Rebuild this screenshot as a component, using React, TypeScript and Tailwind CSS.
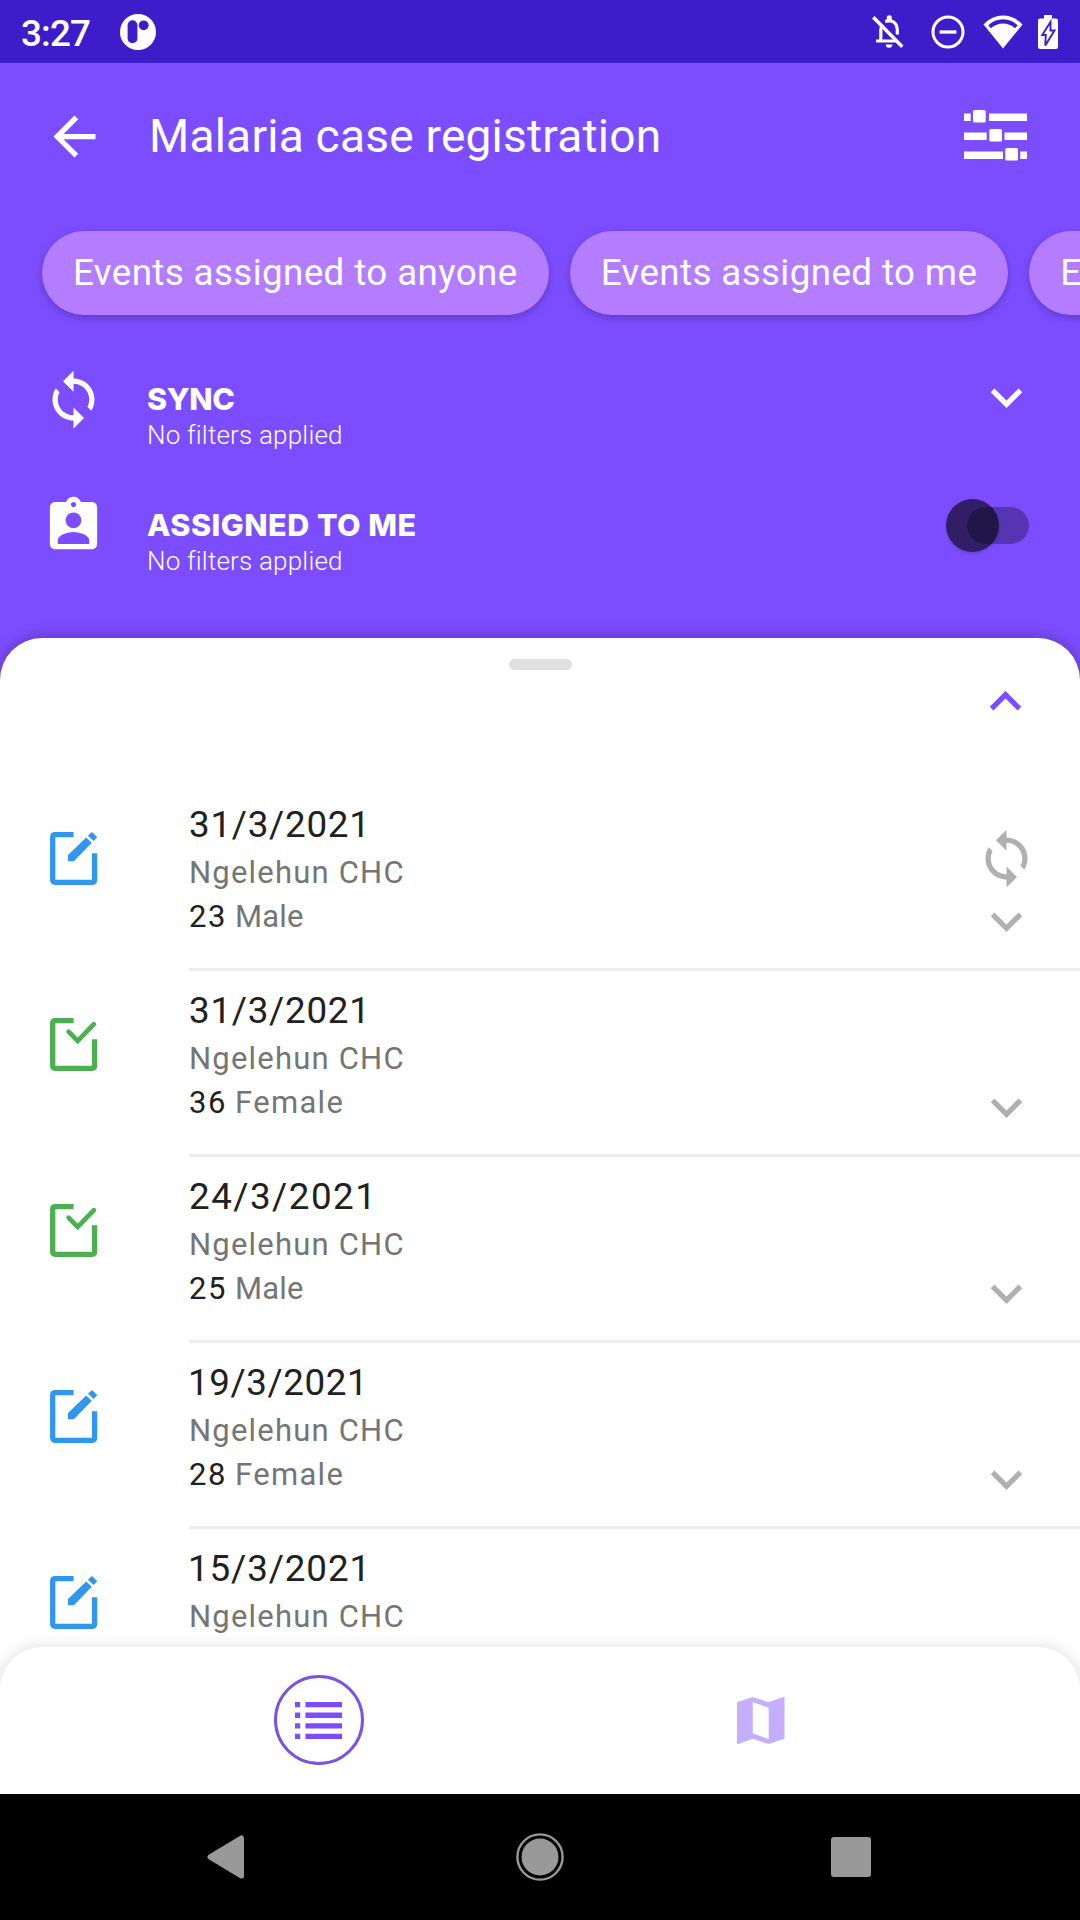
import type { ReactNode } from 'react';

type Status = 'open' | 'completed';

interface CaseEvent {
  date: string;
  dateClass: string;
  age?: string;
  gender?: 'Male' | 'Female';
  status: Status;
  pendingSync?: boolean;
}

const events: CaseEvent[] = [
  { date: '31/3/2021', dateClass: 'tracking-[0.75px]', age: '23', gender: 'Male', status: 'open', pendingSync: true },
  { date: '31/3/2021', dateClass: 'tracking-[0.75px]', age: '36', gender: 'Female', status: 'completed' },
  { date: '24/3/2021', dateClass: 'tracking-[1.5px]', age: '25', gender: 'Male', status: 'completed' },
  { date: '19/3/2021', dateClass: '-ml-px tracking-[0.6px]', age: '28', gender: 'Female', status: 'open' },
  { date: '15/3/2021', dateClass: '-ml-px tracking-[0.9px]', status: 'open' },
];

function Icon24({ d, className }: { d: string; className?: string }) {
  return (
    <svg viewBox="0 0 24 24" className={`size-[63px] shrink-0 ${className ?? ''}`} fill="currentColor">
      <path d={d} />
    </svg>
  );
}

const SYNC =
  'M12 4V1L8 5l4 4V6c3.31 0 6 2.69 6 6 0 1.01-.25 1.97-.7 2.8l1.46 1.46C19.54 15.03 20 13.57 20 12c0-4.42-3.58-8-8-8zm0 14c-3.31 0-6-2.69-6-6 0-1.01.25-1.97.7-2.8L5.24 7.74C4.46 8.97 4 10.43 4 12c0 4.42 3.58 8 8 8v3l4-4-4-4v3z';
const CHEVRON_DOWN = 'M7.41 8.59L12 13.17l4.59-4.58L18 10l-6 6-6-6z';
const CHEVRON_UP = 'M7.41 15.41L12 10.83l4.59 4.58L18 14l-6-6-6 6z';
const ARROW_BACK = 'M20 11H7.83l5.59-5.59L12 4l-8 8 8 8 1.41-1.41L7.83 13H20v-2z';
const ASSIGNMENT_IND =
  'M19 3h-4.18C14.4 1.84 13.3 1 12 1c-1.3 0-2.4.84-2.82 2H5c-1.1 0-2 .9-2 2v14c0 1.1.9 2 2 2h14c1.1 0 2-.9 2-2V5c0-1.1-.9-2-2-2zm-7 0c.55 0 1 .45 1 1s-.45 1-1 1-1-.45-1-1 .45-1 1-1zm0 4c1.66 0 3 1.34 3 3s-1.34 3-3 3-3-1.34-3-3 1.34-3 3-3zm6 12H6v-1.4c0-2 4-3.1 6-3.1s6 1.1 6 3.1V19z';

function StatusBar() {
  return (
    <div className="flex h-[63px] shrink-0 items-center bg-[#3D1CC9] pl-[21px] text-white">
      <span className="w-[99px] pt-1 text-[36.75px] leading-[64px] font-medium tracking-[-0.8px]">3:27</span>
      <svg width="36" height="36" viewBox="0 0 36 36">
        <circle cx="18" cy="18" r="18" fill="#fff" />
        <rect x="7.6" y="6.3" width="9.8" height="23" rx="4.9" fill="#3D1CC9" />
        <circle cx="23.7" cy="11.3" r="4.9" fill="#3D1CC9" />
      </svg>
      <svg width="33" height="34" viewBox="0 0 33 34" className="ml-auto" fill="none" stroke="#fff">
        <path d="M8.800 26V15q0-3.500 1.600-5.600M13.2 6.400Q25.300 3.600 25.300 16v3.500" strokeWidth="3.2" />
        <path d="M4 26H24" strokeWidth="3" />
        <path d="M1.300 2.200l29 29.500" strokeWidth="3.4" />
        <path d="M13.800 29.400h6.600a3.300 3.300 0 0 1-6.600 0zM14.800 6V2.800a2.500 2.500 0 0 1 5 0V6z" fill="#fff" stroke="none" />
      </svg>
      <svg width="34" height="34" viewBox="0 0 34 34" className="ml-[26px]" fill="none" stroke="#fff" strokeWidth="3">
        <circle cx="17" cy="17" r="15" />
        <path d="M8.500 17h17" strokeWidth="3.300" />
      </svg>
      <svg width="40" height="34" viewBox="0 0 40 34" className="ml-[18px]">
        <path d="M20 33.5L0.500 9.500Q9 0.500 20 0.500T39.500 9.500z" fill="#fff" />
        <path d="M5.300 10.300Q11.500 4.300 20 4.300T34.700 10.300L32 13.200Q26.500 8.600 20 8.600T8 13.200z" fill="#3D1CC9" />
      </svg>
      <svg width="20" height="34" viewBox="0 0 20 34" className="mr-[22px] ml-[15px]">
        <path d="M6 0h8v3.500h4q2 0 2 2V32q0 2-2 2H2q-2 0-2-2V5.500q0-2 2-2h4z" fill="#fff" />
        <path d="M12.500 7L4.200 20h3.600l-.5 10.500L16.500 15.500h-4z" fill="#fff" stroke="#3D1CC9" strokeWidth="1.900" />
      </svg>
    </div>
  );
}

function TuneIcon() {
  return (
    <svg width="63" height="51" viewBox="0 0 63 51" className="-mt-0.5" fill="#fff">
      <path d="M0 3.500h6.700V11H0zM25 3.500h38V11H25zM0 22.500h22.700V30H0zM40.500 22.500H63V30H40.500zM0 41.500h39V49H0zM56.300 41.500H63V49h-6.700z" />
      <rect x="9" y="0" width="12.700" height="12.400" rx="1.500" />
      <rect x="25.300" y="19" width="12.700" height="12.400" rx="1.500" />
      <rect x="41.300" y="38" width="12.700" height="12.400" rx="1.500" />
    </svg>
  );
}

function Chip({ children }: { children: ReactNode }) {
  return (
    <div className="flex h-[84px] shrink-0 items-center rounded-full bg-[#B47CFF] pr-[31px] pb-px pl-[31px] text-[36.75px] tracking-[0.39px] whitespace-nowrap shadow-[0_3px_8px_rgba(0,0,0,0.22)]">
      {children}
    </div>
  );
}

function FilterRow({
  icon,
  title,
  titleClass,
  children,
}: {
  icon: string;
  title: string;
  titleClass: string;
  children: ReactNode;
}) {
  return (
    <div className="flex h-[126px] items-start px-[42px]">
      <Icon24 d={icon} className="mt-8" />
      <div className="ml-[42px] flex-1 pt-11">
        <div className={`font-[Inter] text-[30.5px] leading-[38px] font-extrabold ${titleClass}`}>{title}</div>
        <div className="text-[26px] leading-[34px] font-light tracking-[0.2px]">No filters applied</div>
      </div>
      {children}
    </div>
  );
}

function Toggle() {
  return (
    <div className="relative mt-[37px] mr-[9px] flex h-[53px] w-[83px] items-center justify-end">
      <div className="h-[37px] w-[62px] rounded-full bg-black/30" />
      <div className="absolute top-0 left-0 size-[53px] rounded-full bg-black/60 shadow-[0_2px_3px_rgba(0,0,0,0.15)]" />
    </div>
  );
}

function StatusIcon({ status }: { status: Status }) {
  const open = status === 'open';
  return (
    <svg width="48" height="53" viewBox="0 0 48 53" className={open ? 'text-[#2F98EE]' : 'text-[#4CAF50]'}>
      <path
        d="M23.600 2.700H5.200Q2.700 2.700 2.700 5.200V47.800Q2.700 50.300 5.200 50.300H42.100Q44.600 50.300 44.600 47.800V21.200"
        fill="none"
        stroke="currentColor"
        strokeWidth="5.300"
      />
      {open ? (
        <path d="M18 29.300v-6.200L36.200 5.400l5.600 5.300L23.900 29.300zM37.900 3.700L42 0l5.300 5.300-3.700 3.800z" fill="currentColor" />
      ) : (
        <path d="M18.600 13.700L27.700 23L43.900 6.200" fill="none" stroke="currentColor" strokeWidth="4.700" strokeLinecap="round" />
      )}
    </svg>
  );
}

function EventRow({ event }: { event: CaseEvent }) {
  return (
    <div className="flex h-[186px] shrink-0">
      <div className="w-[189px] shrink-0 pt-[47px] pl-[50px]">
        <StatusIcon status={event.status} />
      </div>
      <div className="flex flex-1 justify-between border-b-[3px] border-[#EDEDED] pr-[42px]">
        <div className="pt-[18px] text-[31px] leading-[44px] text-[#757575]">
          <div className={`h-12 text-[36.75px] text-[#212121] ${event.dateClass}`}>{event.date}</div>
          <div className="tracking-[1.2px]">Ngelehun CHC</div>
          {event.age && (
            <div className="flex gap-2">
              <span className="tracking-[1.6px] text-[#212121]">{event.age}</span>
              <span className={event.gender === 'Female' ? 'tracking-[1.3px]' : 'tracking-[0.2px]'}>{event.gender}</span>
            </div>
          )}
        </div>
        {event.age && (
          <div className="flex flex-col pt-[42px] text-[#B0B0B0]">
            <div className="h-[63px]">{event.pendingSync && <Icon24 d={SYNC} />}</div>
            <Icon24 d={CHEVRON_DOWN} />
          </div>
        )}
      </div>
    </div>
  );
}

function BottomTabs() {
  return (
    <div className="relative -mt-[42px] flex h-[147px] shrink-0 items-center rounded-t-[42px] bg-white shadow-[0_0_16px_rgba(0,0,0,0.14)]">
      <div className="mb-px ml-[274px] flex size-[90px] items-center justify-center rounded-full border-3 border-[#7A52E6] pr-px">
        <svg width="47" height="37" viewBox="0 0 47 37" fill="#7C4DFF">
          <path d="M0 0h5.200v5.300H0zM10.400 0H47v5.300H10.400zM0 10.600h5.200v5.300H0zM10.400 10.600H47v5.300H10.400zM0 21.200h5.200v5.300H0zM10.400 21.200H47v5.300H10.400zM0 31.800h5.200v5.200H0zM10.400 31.800H47v5.200H10.400z" />
        </svg>
      </div>
      <svg width="48" height="47" viewBox="0 0 48 47" className="ml-[373px]" fill="#C5AEFF">
        <path
          fillRule="evenodd"
          d="M0 5.300L15.800 0l15.700 5.300L45.800 0.200Q47.500-.2 47.500 1.300V41.800L31.500 47l-15.700-5.300L1.500 46.900Q0 47.300 0 45.800zM15.800 5.300V36.600l15.900 5.300V10.700z"
        />
      </svg>
    </div>
  );
}

function SystemNav() {
  return (
    <div className="flex h-[126px] shrink-0 items-center bg-black">
      <svg width="38" height="44" viewBox="0 0 38 44" className="ml-[207px]">
        <path d="M3 22L34.500 3V41z" fill="#999" stroke="#999" strokeWidth="5" strokeLinejoin="round" />
      </svg>
      <svg width="48" height="48" viewBox="0 0 48 48" className="ml-[271px]">
        <circle cx="24" cy="24" r="22.600" fill="none" stroke="#999" strokeWidth="2.400" />
        <circle cx="24" cy="24" r="18.500" fill="#999" />
      </svg>
      <div className="ml-[267px] size-10 rounded-[3px] bg-[#999]" />
    </div>
  );
}

export default function App() {
  return (
    <div className="flex h-[1920px] w-[1080px] flex-col overflow-hidden bg-[#7C4DFF] font-[Roboto,sans-serif] text-white">
      <StatusBar />
      <div className="flex h-[147px] shrink-0 items-center pr-[53px] pl-[43px]">
        <Icon24 d={ARROW_BACK} />
        <h1 className="ml-[43px] flex-1 pb-px text-[46px] tracking-[0.25px]">Malaria case registration</h1>
        <TuneIcon />
      </div>
      <div className="flex h-[105px] shrink-0 gap-[21px] pt-[21px] pl-[42px]">
        <Chip>Events assigned to anyone</Chip>
        <Chip>Events assigned to me</Chip>
        <Chip>Events</Chip>
      </div>
      <div className="h-[323px] shrink-0 pt-[21px]">
        <FilterRow icon={SYNC} title="SYNC" titleClass="tracking-[-0.4px]">
          <Icon24 d={CHEVRON_DOWN} className="mt-[30px]" />
        </FilterRow>
        <FilterRow icon={ASSIGNMENT_IND} title="ASSIGNED TO ME" titleClass="tracking-[0.5px]">
          <Toggle />
        </FilterRow>
      </div>
      <div className="flex min-h-0 flex-1 flex-col rounded-t-[42px] bg-white shadow-[0_0_16px_rgba(0,0,0,0.3)]">
        <div className="flex h-[147px] shrink-0 flex-col items-center pt-[21px]">
          <div className="h-[11px] w-[63px] rounded-full bg-[#E0E0E0]" />
          <Icon24 d={CHEVRON_UP} className="mr-[43px] self-end text-[#7C4DFF]" />
        </div>
        <div className="flex min-h-0 flex-1 flex-col overflow-hidden">
          {events.map((event, i) => (
            <EventRow key={i} event={event} />
          ))}
        </div>
        <BottomTabs />
      </div>
      <SystemNav />
    </div>
  );
}
